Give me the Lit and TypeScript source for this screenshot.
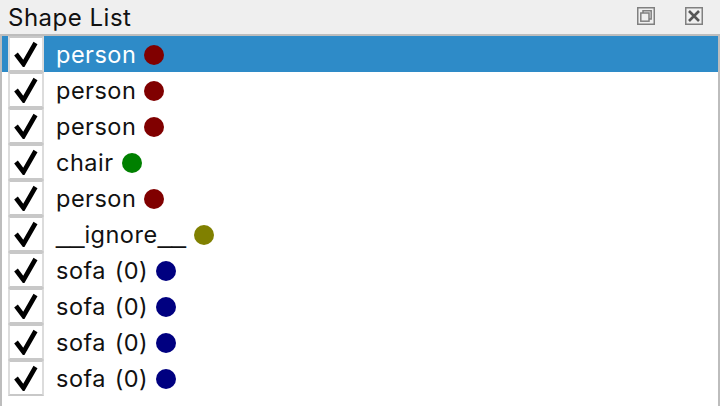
import { LitElement, html, css } from "lit";
import { customElement } from "lit/decorators.js";

const ROWS: [string, string][] = [
  ["person", "#800000"],
  ["person", "#800000"],
  ["person", "#800000"],
  ["chair", "#008000"],
  ["person", "#800000"],
  ["__ignore__", "#808000"],
  ["sofa (0)", "#000080"],
  ["sofa (0)", "#000080"],
  ["sofa (0)", "#000080"],
  ["sofa (0)", "#000080"],
];

@customElement("app-root")
export class AppRoot extends LitElement {
  static styles = css`
    :host {
      display: flex;
      flex-direction: column;
      width: 720px;
      height: 406px;
      overflow: hidden;
      background: #fff;
      font-family: Inter, "Liberation Sans", sans-serif;
      color: #111;
    }
    .title {
      height: 34px;
      flex: none;
      display: flex;
      align-items: center;
      background: #efefef;
      padding: 0 17px 2px 8px;
      box-sizing: border-box;
    }
    .title span {
      flex: 1;
      font-size: 24px;
      letter-spacing: 0.5px;
      padding-top: 2px;
    }
    .btns {
      display: flex;
      gap: 30px;
    }
    .btns svg {
      display: block;
    }
    .list {
      flex: 1;
      border: 2px solid #bdbdbd;
      border-bottom: none;
      box-sizing: border-box;
    }
    .row {
      height: 36px;
      display: flex;
      align-items: center;
      padding-left: 6px;
      box-sizing: border-box;
    }
    .row.sel {
      background: #2e8bc8;
      color: #fff;
    }
    .check {
      width: 36px;
      height: 36px;
      box-sizing: border-box;
      border: 2px solid #dcdcdc;
      border-top-color: #c8c8c8;
      border-bottom-color: #c8c8c8;
      background: #fff;
      display: flex;
      align-items: center;
      justify-content: center;
      flex: none;
    }
    .label {
      margin-left: 12px;
      font-size: 23.5px;
      letter-spacing: 0.5px;
      word-spacing: 1.5px;
      white-space: pre;
    }
    .us {
      font-family: "Liberation Sans", sans-serif;
      font-size: 25.5px;
      letter-spacing: 0;
    }
    .dot {
      width: 20px;
      height: 20px;
      border-radius: 50%;
      margin-left: 8px;
      margin-top: 1px;
      flex: none;
    }
  `;

  private label(name: string) {
    const m = name.match(/^(__)(.*)(__)$/);
    if (!m) return name;
    return html`<span class="us">__</span>${m[2]}<span class="us">__</span>`;
  }

  render() {
    return html`
      <div class="title">
        <span>Shape List</span>
        <div class="btns">
          <svg width="18" height="18" viewBox="0 0 18 18" fill="none">
            <rect x="0.75" y="0.75" width="16.5" height="16.5" stroke="#808080" stroke-width="1.5" />
            <rect x="3.8" y="6" width="8.2" height="8.2" stroke="#808080" stroke-width="1.5" />
            <path d="M6 6V3.8h8.2V12H12" stroke="#808080" stroke-width="1.5" />
          </svg>
          <svg width="18" height="18" viewBox="0 0 18 18" fill="none">
            <rect x="0.75" y="0.75" width="16.5" height="16.5" stroke="#808080" stroke-width="1.5" />
            <path d="M4 4L14 14M14 4L4 14" stroke="#555" stroke-width="2.6" />
          </svg>
        </div>
      </div>
      <div class="list">
        ${ROWS.map(
          ([name, color], i) => html`
            <div class="row ${i === 0 ? "sel" : ""}">
              <div class="check">
                <svg width="24" height="26" viewBox="0 0 24 26" fill="none">
                  <path d="M2 13L9.5 23L21.5 2" stroke="#000" stroke-width="4.6" />
                </svg>
              </div>
              <span class="label">${this.label(name)}</span>
              <span class="dot" style="background:${color}"></span>
            </div>
          `
        )}
      </div>
    `;
  }
}
